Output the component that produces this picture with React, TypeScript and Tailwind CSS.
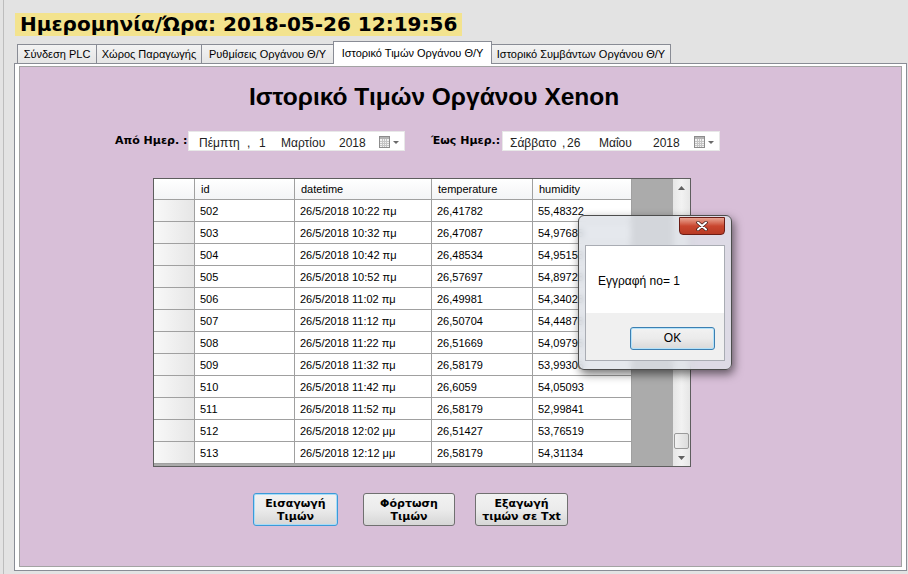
import React from 'react';

const rows = [
  ['502', '26/5/2018 10:22 πμ', '26,41782', '55,48322'],
  ['503', '26/5/2018 10:32 πμ', '26,47087', '54,97685'],
  ['504', '26/5/2018 10:42 πμ', '26,48534', '54,95153'],
  ['505', '26/5/2018 10:52 πμ', '26,57697', '54,89728'],
  ['506', '26/5/2018 11:02 πμ', '26,49981', '54,34028'],
  ['507', '26/5/2018 11:12 πμ', '26,50704', '54,44878'],
  ['508', '26/5/2018 11:22 πμ', '26,51669', '54,09795'],
  ['509', '26/5/2018 11:32 πμ', '26,58179', '53,99306'],
  ['510', '26/5/2018 11:42 πμ', '26,6059', '54,05093'],
  ['511', '26/5/2018 11:52 πμ', '26,58179', '52,99841'],
  ['512', '26/5/2018 12:02 μμ', '26,51427', '53,76519'],
  ['513', '26/5/2018 12:12 μμ', '26,58179', '54,31134'],
];

const tabs = [
  { label: 'Σύνδεση PLC', w: 'w-[80px]' },
  { label: 'Χώρος Παραγωγής', w: 'w-[106px]' },
  { label: 'Ρυθμίσεις Οργάνου Θ/Υ', w: 'w-[133px]' },
  { label: 'Ιστορικό Τιμών Οργάνου Θ/Υ', w: 'w-[159px]', active: true },
  { label: 'Ιστορικό Συμβάντων Οργάνου Θ/Υ', w: 'w-[180px]' },
];

function CalendarIcon() {
  return (
    <svg width="22" height="14" viewBox="0 0 22 14">
      <rect x="1.5" y="1.5" width="10" height="11" fill="#f2f2f2" stroke="#8c8c8c" />
      <rect x="2" y="2" width="9" height="2" fill="#b4b4b4" />
      <path d="M2 6.5h9M2 8.5h9M2 10.5h9M4.5 4v8M6.5 4v8M8.5 4v8" stroke="#c4c4c4" strokeWidth="1" />
      <path d="M15 6h6l-3 3z" fill="#6a6a6a" />
    </svg>
  );
}

function DatePicker({ parts, w }: { parts: { t: string; c: string }[]; w: string }) {
  return (
    <div className={`${w} h-[20px] bg-white border border-[#e8e8e8] flex items-center text-[12px] text-[#222] relative`}>
      {parts.map((p, i) => (
        <span key={i} className={`absolute top-[2px] ${p.c}`}>
          {p.t}
        </span>
      ))}
      <span className="absolute right-[4px] top-[3px]">
        <CalendarIcon />
      </span>
    </div>
  );
}

function WinButton({ lines, w, focused }: { lines: string[]; w: string; focused?: boolean }) {
  return (
    <button
      className={`${w} h-[33px] rounded-[3px] border ${
        focused ? 'border-[#3c9ad8] shadow-[inset_0_0_0_1px_#a8dcf7]' : 'border-[#707070]'
      } bg-gradient-to-b from-[#f2f2f2] via-[#ebebeb] to-[#d6d6d6] font-['DejaVu_Sans',sans-serif] font-bold text-[11px] leading-[13px] text-black flex flex-col items-center justify-center`}
    >
      {lines.map((l) => (
        <span key={l}>{l}</span>
      ))}
    </button>
  );
}

const colW = ['w-[41px]', 'w-[100px]', 'w-[137px]', 'w-[101px]', 'w-[99px]'];

export default function App() {
  return (
    <div className="relative w-[908px] h-[574px] bg-[#e3e3e3] overflow-hidden font-['Liberation_Sans',sans-serif]">
      <div className="ml-[3px] h-full border-l border-[#bdbdbd] pt-[13px]">
        {/* Ημερομηνία */}
        <div className="ml-[11px] w-[447px] h-[23px] bg-[#f3e38e] pl-[5px] font-['DejaVu_Sans',sans-serif] font-bold text-[20px] leading-[23px] text-black whitespace-nowrap">
          Ημερομηνία/Ώρα: 2018-05-26 12:19:56
        </div>

        {/* Tabs */}
        <div className="mt-[5px] ml-[13px] h-[22px] flex items-end relative z-10">
          {tabs.map((t) =>
            t.active ? (
              <div
                key={t.label}
                className={`${t.w} h-[23px] -mb-px -mr-px bg-white border border-b-0 border-[#898c95] text-[11px] text-black flex items-center justify-center whitespace-nowrap`}
              >
                {t.label}
              </div>
            ) : (
              <div
                key={t.label}
                className={`${t.w} h-[19px] -mr-px bg-gradient-to-b from-[#f3f3f3] to-[#e5e5e5] border border-b-0 border-[#898c95] text-[11px] text-black flex items-center justify-center whitespace-nowrap`}
              >
                {t.label}
              </div>
            )
          )}
        </div>

        {/* Tab page */}
        <div className="ml-[10px] mr-[1px] h-[508px] bg-white border border-[#898c95] px-[4px] pt-[2px] pb-[3px]">
          <div className="h-full bg-[#d8bfd8] border border-[#a3a3a3] flex flex-col">
            <h1 className="mt-[18px] ml-[229px] text-[24.5px] leading-[24px] font-bold text-black whitespace-nowrap">
              Ιστορικό Τιμών Οργάνου Xenon
            </h1>

            {/* Dates */}
            <div className="mt-[22px] ml-[95px] flex items-center h-[20px]">
              <span className="w-[73px] font-['DejaVu_Sans',sans-serif] font-bold text-[11px] text-black whitespace-nowrap">
                Από Ημερ. :
              </span>
              <DatePicker
                w="w-[217px]"
                parts={[
                  { t: 'Πέμπτη', c: 'left-[10px]' },
                  { t: ',', c: 'left-[58px]' },
                  { t: '1', c: 'left-[70px]' },
                  { t: 'Μαρτίου', c: 'left-[92px]' },
                  { t: '2018', c: 'left-[150px]' },
                ]}
              />
              <span className="ml-[26px] w-[71px] font-['DejaVu_Sans',sans-serif] font-bold text-[11px] text-black whitespace-nowrap">
                Έως Ημερ.:
              </span>
              <DatePicker
                w="w-[218px]"
                parts={[
                  { t: 'Σάββατο', c: 'left-[7px]' },
                  { t: ',', c: 'left-[59px]' },
                  { t: '26', c: 'left-[64px]' },
                  { t: 'Μαΐου', c: 'left-[96px]' },
                  { t: '2018', c: 'left-[150px]' },
                ]}
              />
            </div>

            {/* Grid */}
            <div className="mt-[27px] ml-[133px] w-[538px] h-[289px] border border-[#5e5e5e] bg-[#ababab] flex">
              <div className="w-[478px] flex flex-col">
                <div className="h-[21px] flex border-b border-[#a0a0a0] bg-gradient-to-b from-white to-[#f3f4f6]">
                  {['', 'id', 'datetime', 'temperature', 'humidity'].map((h, i) => (
                    <div
                      key={i}
                      className={`${colW[i]} h-full border-r border-[#a0a0a0] pl-[6px] text-[11px] leading-[20px] text-black`}
                    >
                      {h}
                    </div>
                  ))}
                </div>
                {rows.map((r) => (
                  <div key={r[0]} className="h-[22px] flex border-b border-[#a0a0a0] bg-white">
                    <div className="w-[41px] h-full border-r border-[#a0a0a0] bg-gradient-to-r from-[#f8f8f8] to-[#e6e6e6]" />
                    {r.map((c, i) => (
                      <div
                        key={i}
                        className={`${colW[i + 1]} h-full border-r border-[#a0a0a0] pl-[5px] text-[11px] leading-[22px] text-black whitespace-nowrap overflow-hidden`}
                      >
                        {c}
                      </div>
                    ))}
                  </div>
                ))}
              </div>
              <div className="flex-1" />
              {/* Scrollbar */}
              <div className="w-[17px] h-full bg-gradient-to-r from-[#e6e6e6] via-[#f2f2f2] to-[#e6e6e6] flex flex-col items-center">
                <div className="h-[17px] flex items-center justify-center">
                  <svg width="7" height="4" viewBox="0 0 7 4">
                    <path d="M0 4L3.5 0L7 4z" fill="#606060" />
                  </svg>
                </div>
                <div className="flex-1" />
                <div className="w-[15px] h-[16px] rounded-[2px] border border-[#9a9a9a] bg-gradient-to-r from-[#f2f2f2] to-[#dcdcdc]" />
                <div className="h-[17px] flex items-center justify-center">
                  <svg width="7" height="4" viewBox="0 0 7 4">
                    <path d="M0 0L7 0L3.5 4z" fill="#606060" />
                  </svg>
                </div>
              </div>
            </div>

            {/* Buttons */}
            <div className="mt-[26px] ml-[233px] flex">
              <WinButton w="w-[85px]" lines={['Εισαγωγή', 'Τιμών']} focused />
              <div className="ml-[25px]">
                <WinButton w="w-[92px]" lines={['Φόρτωση', 'Τιμών']} />
              </div>
              <div className="ml-[20px]">
                <WinButton w="w-[93px]" lines={['Εξαγωγή', 'τιμών σε Txt']} />
              </div>
            </div>
          </div>
        </div>
      </div>

      {/* Message box */}
      <div className="absolute left-[578px] top-[215px] w-[154px] h-[155px] rounded-[6px] border border-[#4d4d4d] bg-[rgba(222,226,232,0.78)] backdrop-blur-[3px] shadow-[2px_4px_10px_rgba(0,0,0,0.55)] flex flex-col">
        <div className="h-[29px] relative">
          <div className="absolute right-[6px] top-[1px] w-[46px] h-[18px] rounded-b-[4px] border border-[#6b1c14] bg-gradient-to-b from-[#e8a493] via-[#c9462f] to-[#b83a24] flex items-center justify-center">
            <svg width="12" height="10" viewBox="0 0 12 10">
              <path d="M2 1.5L10 8.5M10 1.5L2 8.5" stroke="#3a1a16" strokeWidth="3.4" strokeLinecap="round" />
              <path d="M2 1.5L10 8.5M10 1.5L2 8.5" stroke="#ffffff" strokeWidth="2" strokeLinecap="round" />
            </svg>
          </div>
        </div>
        <div className="mx-[6px] border border-[#a9acb3]">
          <div className="h-[67px] bg-white pl-[12px] pt-[28px] text-[12px] leading-[14px] text-black whitespace-nowrap">
            Εγγραφή no= 1
          </div>
          <div className="h-[47px] bg-[#f0f0f0] pl-[44px] pt-[12px]">
            <button className="w-[85px] h-[23px] rounded-[3px] border border-[#3c7fb1] shadow-[inset_0_0_0_1px_#b3e2fa] bg-gradient-to-b from-[#f2f2f2] via-[#ebebeb] to-[#d9d9d9] text-[12px] text-black">
              OK
            </button>
          </div>
        </div>
      </div>
    </div>
  );
}
